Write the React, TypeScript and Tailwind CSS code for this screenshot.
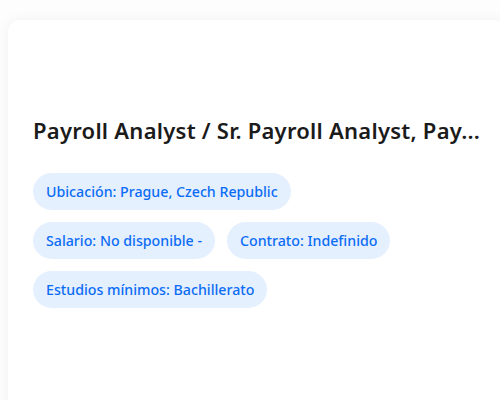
import React from "react";

const pills: string[][] = [
  ["Ubicación: Prague, Czech Republic"],
  ["Salario: No disponible -", "Contrato: Indefinido"],
  ["Estudios mínimos: Bachillerato"],
];

export default function App() {
  return (
    <div
      className="w-[500px] h-[400px] overflow-hidden bg-[#fdfdfd]"
      style={{ fontFamily: '"Noto Sans", "Open Sans", sans-serif' }}
    >
      <div className="ml-2 mt-5 w-[497px] h-[420px] rounded-xl bg-white shadow-[0_0_14px_rgba(0,0,0,0.05)] px-[25px] pt-[96px]">
        <h1 className="whitespace-nowrap text-[22px] leading-[29px] font-semibold tracking-[0.25px] text-[#1b1b1b]">
          Payroll Analyst / Sr. Payroll Analyst, Pay...
        </h1>
        <div className="mt-7 flex flex-col gap-3">
          {pills.map((row, i) => (
            <div key={i} className="flex gap-3">
              {row.map((p) => (
                <span
                  key={p}
                  className="rounded-full bg-[#e5f0ff] px-[13px] py-2 text-[14.2px] leading-[21px] font-medium text-[#0b6cf5]"
                >
                  {p}
                </span>
              ))}
            </div>
          ))}
        </div>
      </div>
    </div>
  );
}
